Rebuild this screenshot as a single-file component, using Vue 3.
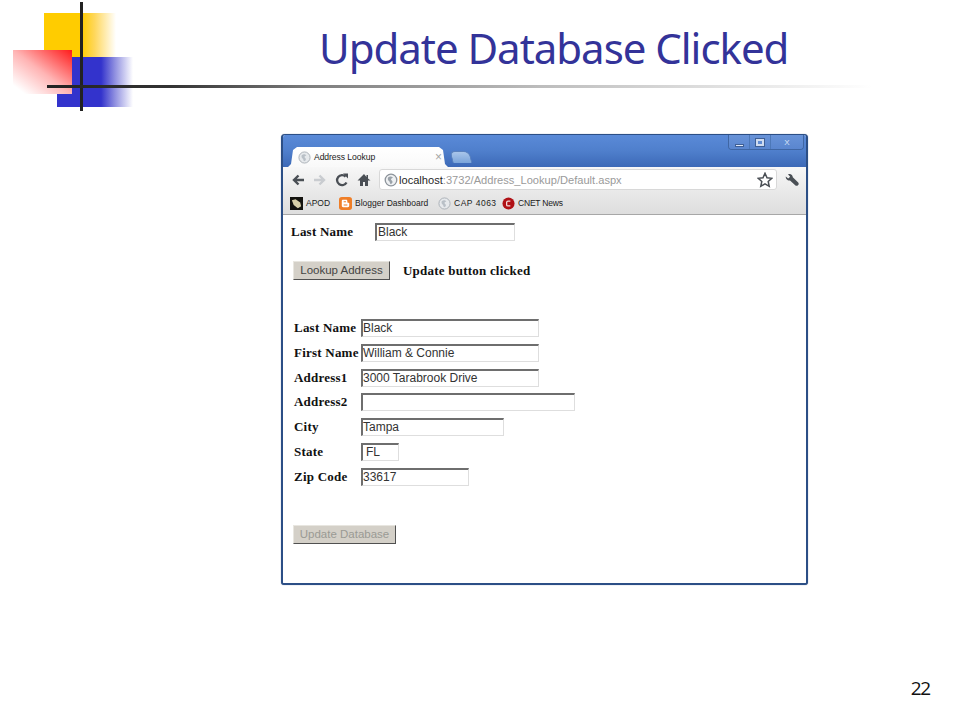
<script setup>
const bookmarks = [
  { kind: 'apod', label: 'APOD', width: 49, spacing: 0 },
  { kind: 'blogger', label: 'Blogger Dashboard', width: 99, spacing: 0 },
  { kind: 'globe', label: 'CAP 4063', width: 64, spacing: 0.5 },
  { kind: 'cnet', label: 'CNET News', width: 70, spacing: -0.2 }
]
const rows = [
  { label: 'Last Name', value: 'Black', width: 178 },
  { label: 'First Name', value: 'William & Connie', width: 178 },
  { label: 'Address1', value: '3000 Tarabrook Drive', width: 178 },
  { label: 'Address2', value: '', width: 214 },
  { label: 'City', value: 'Tampa', width: 143 },
  { label: 'State', value: 'FL', width: 38, pad: true },
  { label: 'Zip Code', value: '33617', width: 108 }
]
</script>

<template>
  <main class="slide">
    <div class="logo" aria-hidden="true">
      <div class="sq yellow"></div>
      <div class="sq blue"></div>
      <div class="sq red"></div>
      <div class="line v"></div>
      <div class="line h"></div>
    </div>

    <h1 class="title">Update Database Clicked</h1>

    <section class="browser">
      <div class="titlebar">
        <div class="tab">
          <svg class="fav" viewBox="0 0 14 14"><circle cx="7" cy="7" r="6" fill="#e6e9ec" stroke="#a9afb5"/><path d="M4 4.500c2-1.500 4-1 5 .5-1 0-2 .5-2 1.500s1.500 1 1.500 2.500S7 11 6.500 11 6 8.500 5 8 3.500 6 4 4.500z" fill="#b9c0c7"/></svg>
          <span class="tab-title">Address Lookup</span>
          <span class="tab-x">×</span>
        </div>
        <div class="newtab"></div>
        <div class="winbtns">
          <span class="wb"><i class="min"></i></span>
          <span class="wb"><i class="max"></i></span>
          <span class="wb wide">X</span>
        </div>
      </div>

      <div class="toolbar">
        <svg class="ico" viewBox="0 0 14 14"><path d="M13 7H4M7.500 2.500 3 7l4.500 4.500" fill="none" stroke="#4a4f55" stroke-width="2.400"/></svg>
        <svg class="ico" viewBox="0 0 14 14"><path d="M1 7h9M6.500 2.500 11 7l-4.500 4.500" fill="none" stroke="#c9ccd0" stroke-width="2.400"/></svg>
        <svg class="ico" viewBox="0 0 14 14"><path d="M11.500 9.500A5 5 0 1 1 10.600 3.600" fill="none" stroke="#4a4f55" stroke-width="2.300"/><path d="M8 .5h5v5z" fill="#4a4f55"/></svg>
        <svg class="ico" viewBox="0 0 14 14"><path d="M7 1 .5 7.500H3V13h3V9h2v4h3V7.500h2.500L11 5.500V2H9.500v2z" fill="#4a4f55"/></svg>
        <div class="omnibox">
          <svg class="fav small" viewBox="0 0 14 14"><circle cx="7" cy="7" r="5.800" fill="#eef0f2" stroke="#8d949b" stroke-width="1.300"/><path d="M4 4.500c2-1.500 4-1 5 .5-1 0-2 .5-2 1.500s1.500 1 1.500 2.500S7 11 6.500 11 6 8.500 5 8 3.500 6 4 4.500z" fill="#9aa2a9"/></svg>
          <span class="url"><b>localhost</b>:3732/Address_Lookup/Default.aspx</span>
          <svg class="star" viewBox="0 0 16 16"><path d="m8 1.300 2 4.500 4.800.5-3.600 3.200 1 4.800L8 11.900l-4.200 2.400 1-4.800L1.200 6.300 6 5.800z" fill="#fff" stroke="#4a4f55" stroke-width="1.500"/></svg>
        </div>
        <svg class="wrench" viewBox="0 0 14 14"><path d="M.8 3.400 3.200 5.500 5.200 3.700 3 1.300C5.200.2 7.800 1.600 7.800 4.200L13.200 9.400C14 10.200 13.800 11.400 13 12.200S11 13 10.200 12.200L5 7.400C2.800 7.900.4 5.800.8 3.400z" fill="#4a4f55"/></svg>
      </div>

      <div class="bookmarks">
        <span v-for="b in bookmarks" :key="b.label" class="bm" :style="{ width: b.width + 'px', letterSpacing: b.spacing + 'px' }">
          <svg v-if="b.kind === 'apod'" class="bmi" viewBox="0 0 14 14"><rect width="14" height="14" fill="#14130f"/><path d="M2 3.500 6 2.500l5 3.500 1 4-3.500 2L4 8.500z" fill="#d8cfa8"/></svg>
          <svg v-else-if="b.kind === 'blogger'" class="bmi" viewBox="0 0 14 14"><rect width="14" height="14" rx="3" fill="#ef7e27"/><path d="M3 7V4.500C3 3.500 3.500 3 4.500 3h3C8.500 3 9 3.500 9 4.500V6l2 .5V9.500c0 1-.5 1.500-1.500 1.500h-5C3.500 11 3 10.500 3 9.500z" fill="#fff"/><path d="M5 5.200h2.500M5 8.700h4" stroke="#ef7e27" stroke-width="1.100"/></svg>
          <svg v-else-if="b.kind === 'globe'" class="bmi" viewBox="0 0 14 14"><circle cx="7" cy="7" r="6" fill="#e6e9ec" stroke="#a9afb5"/><path d="M4 4.500c2-1.500 4-1 5 .5-1 0-2 .5-2 1.500s1.500 1 1.500 2.500S7 11 6.500 11 6 8.500 5 8 3.500 6 4 4.500z" fill="#b9c0c7"/></svg>
          <svg v-else class="bmi" viewBox="0 0 14 14"><circle cx="7" cy="7" r="6.500" fill="#b01116"/><path d="M9 4.500H6.500C5.500 4.500 5 5 5 6v2.500c0 .7.500 1 1.500 1H9" fill="none" stroke="#f3d9d9" stroke-width="1.400"/></svg>
          {{ b.label }}
        </span>
      </div>

      <div class="page">
        <div class="lookup-row">
          <span class="lbl first">Last Name</span>
          <div class="field lookup-field">Black</div>
        </div>
        <div class="action-row">
          <div class="btn lookup">Lookup Address</div>
          <span class="lbl">Update button clicked</span>
        </div>
        <div class="form">
          <template v-for="r in rows" :key="r.label">
            <span class="lbl">{{ r.label }}</span>
            <div class="field" :class="{ pad: r.pad }" :style="{ width: r.width + 'px' }">{{ r.value }}</div>
          </template>
        </div>
        <div class="btn update">Update Database</div>
      </div>
    </section>

    <footer class="num">22</footer>
  </main>
</template>

<style>
html, body { margin: 0; background: #fff; }
</style>

<style scoped>
.slide {
  position: relative;
  width: 960px;
  height: 720px;
  overflow: hidden;
  background: #fff;
  display: flex;
  flex-direction: column;
}
.title {
  margin: 20px 0 0 319px;
  height: 58px;
  font: 400 42px/56px "Noto Sans", "Open Sans", sans-serif;
  letter-spacing: -1.03px;
  color: #333399;
  white-space: nowrap;
}
.logo { position: absolute; inset: 0; pointer-events: none; }
.sq, .line { position: absolute; }
.yellow { left: 44px; top: 13px; width: 72px; height: 46px; background: linear-gradient(90deg, #ffcc00 0 52%, #ffd75a 70%, #ffffff 100%); }
.blue { left: 57px; top: 57px; width: 76px; height: 50px; background: linear-gradient(90deg, #3333cc 0 58%, #8f8fe0 76%, #ffffff 100%); }
.red { left: 13px; top: 50px; width: 59px; height: 44px; background: linear-gradient(to top right, #ffffff 10%, #ffb4b4 50%, #ff1a1a 100%); }
.v { left: 80px; top: 2px; width: 2.500px; height: 109px; background: #222; }
.h { left: 47px; top: 85px; width: 825px; height: 2.500px; background: linear-gradient(90deg, #222 0, #333 15%, #7d7d7d 32%, #bdbdbd 60%, #ffffff 100%); }

.browser {
  margin: 56px 0 0 281px;
  width: 527px;
  height: 451px;
  box-sizing: border-box;
  border: 1px solid #2c4f86;
  border-width: 1px 2px 2px 2px;
  border-radius: 4px 4px 3px 3px;
  background: #fff;
  display: flex;
  flex-direction: column;
  overflow: hidden;
  box-shadow: 0 0 1px #6c7f9f;
}
.titlebar {
  height: 32px;
  flex: none;
  position: relative;
  display: flex;
  align-items: flex-end;
  padding-left: 5px;
  background: linear-gradient(180deg, #5a8ad8 0, #4f7fcc 50%, #3c69b7 100%);
}
.tab {
  width: 160px;
  height: 20px;
  box-sizing: border-box;
  padding: 0 6px 0 10px;
  background: linear-gradient(#fff, #f9f9f9);
  clip-path: polygon(0 100%, 3px 85%, 5px 15%, 9px 0, calc(100% - 9px) 0, calc(100% - 5px) 15%, calc(100% - 3px) 85%, 100% 100%);
  display: flex;
  align-items: center;
  gap: 3px;
  font: 8.600px "Liberation Sans", sans-serif;
  letter-spacing: -.07px;
  color: #222;
}
.fav { width: 13px; height: 13px; flex: none; }
.fav.small { width: 14px; height: 14px; }
.tab-title { flex: 1; }
.tab-x { color: #a6a6a6; font-size: 12px; }
.newtab {
  width: 20px;
  height: 12px;
  margin: 0 0 4px 3px;
  background: linear-gradient(#a9c6ea, #7aa4da);
  border: 1px solid #5b82bd;
  border-bottom: 0;
  box-sizing: border-box;
  border-radius: 5px 6px 0 0;
  transform: skewX(14deg);
}
.winbtns {
  position: absolute;
  top: 0;
  right: 2px;
  display: flex;
  height: 14px;
  border: 1px solid #3f66a3;
  border-top: 0;
  border-radius: 0 0 4px 4px;
  overflow: hidden;
}
.wb {
  width: 20px;
  display: flex;
  align-items: center;
  justify-content: center;
  border-right: 1px solid #4d78b8;
  background: linear-gradient(#6893d8, #5a86cf);
  font: 400 8px "Liberation Sans", sans-serif;
  color: #d8e4f5;
}
.wb.wide { width: 32px; border-right: 0; }
.min { width: 7px; height: 1px; margin-top: 6px; background: #dfe8f6; border: 1px solid #3f5f95; }
.max { width: 4px; height: 3px; border: 2px solid #cfdcf0; outline: 1px solid #3f5f95; }

.toolbar {
  height: 25px;
  flex: none;
  box-sizing: border-box;
  display: flex;
  align-items: center;
  padding: 0 6px 0 8px;
  gap: 8px;
  background: linear-gradient(#f7f7f7, #e9e9e9);
}
.ico { width: 14px; height: 14px; flex: none; }
.omnibox {
  width: 398px;
  height: 21px;
  box-sizing: border-box;
  border: 1px solid #d8d8d8;
  border-radius: 3px;
  background: #fff;
  display: flex;
  align-items: center;
  padding: 0 3px 0 4px;
  font: 11.100px "Liberation Sans", sans-serif;
  color: #9a9a9a;
  gap: 1px;
}
.url { flex: 1; white-space: nowrap; }
.url b { font-weight: 400; color: #1f1f1f; }
.star { width: 16px; height: 16px; }
.wrench { width: 14px; height: 14px; margin-left: 0; }

.bookmarks {
  height: 23px;
  flex: none;
  box-sizing: border-box;
  border-bottom: 1px solid #a7a7a7;
  display: flex;
  align-items: center;
  padding: 0 0 0 7px;
  background: linear-gradient(#e9e9e9, #dedede);
  font: 8.500px "Liberation Sans", sans-serif;
  color: #1b1b1b;
}
.bm { display: flex; align-items: center; gap: 3px; white-space: nowrap; }
.bmi { width: 13px; height: 13px; flex: none; }

.page {
  flex: 1;
  background: #fff;
  display: flex;
  flex-direction: column;
  padding: 8px 0 0 8px;
  font: 700 13px "Liberation Serif", serif;
  color: #111;
}
.lbl { letter-spacing: .22px; white-space: nowrap; }
.lookup-row { display: flex; align-items: center; height: 18px; }
.first { width: 84px; }
.field {
  box-sizing: border-box;
  height: 18px;
  border: 1px solid #dedede;
  border-top: 2px solid #6e6e6e;
  border-left: 2px solid #6e6e6e;
  padding-left: 0;
  font: 400 12px/14px "Liberation Sans", sans-serif;
  color: #333;
  white-space: nowrap;
  background: #fff;
}
.field.pad { padding-left: 3px; }
.lookup-field { width: 140px; padding-left: 1px; }
.action-row { display: flex; align-items: center; margin: 20px 0 0 2px; height: 19px; gap: 13px; }
.btn {
  box-sizing: border-box;
  height: 19px;
  background: #d4d0c8;
  border: 1px solid;
  border-color: #e8e6e0 #505050 #505050 #e8e6e0;
  font: 400 11.500px/17px "Liberation Sans", sans-serif;
  color: #444;
  text-align: center;
  white-space: nowrap;
}
.lookup { width: 97px; }
.form {
  display: grid;
  grid-template-columns: 67px auto;
  justify-content: start;
  justify-items: start;
  align-items: center;
  row-gap: 6.800px;
  margin: 39px 0 0 3px;
}
.update { width: 103px; margin: 39px 0 0 2px; color: #9a9a94; }

.num {
  position: absolute;
  right: 30px;
  top: 675px;
  font: 19px/26px "Open Sans", "Noto Sans", sans-serif;
  letter-spacing: -1.2px;
  color: #111;
}
</style>
